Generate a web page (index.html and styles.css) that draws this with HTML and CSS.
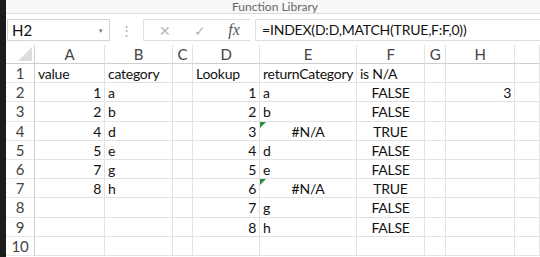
FILE: index.html
```html
<!DOCTYPE html>
<html lang="en">
<head>
  <meta charset="UTF-8">
  <title>Sheet</title>
  <link rel="stylesheet" href="styles.css">
</head>
<body>
  <div class="edge"></div>
  <div class="app">
    <div class="ribbon">Function Library</div>
    <div class="formula-bar">
      <div class="name-box">H2<span class="caret">&#9662;</span></div>
      <div class="grip">&#8942;</div>
      <div class="fx-buttons">
        <span class="btn-x">&#10005;</span>
        <span class="btn-ok">&#10003;</span>
        <span class="btn-fx">fx</span>
      </div>
      <div class="formula">=INDEX(D:D,MATCH(TRUE,F:F,0))</div>
    </div>
    <div class="grid" id="grid"></div>
  </div>

  <script>
    const cols = ['A', 'B', 'C', 'D', 'E', 'F', 'G', 'H', ''];
    // row: [A, B, C, D, E, F, G, H]
    const data = [
      ['value', 'category', '', 'Lookup', 'returnCategory', 'is N/A', '', ''],
      [1, 'a', '', 1, 'a', 'FALSE', '', 3],
      [2, 'b', '', 2, 'b', 'FALSE', '', ''],
      [4, 'd', '', 3, '#N/A', 'TRUE', '', ''],
      [5, 'e', '', 4, 'd', 'FALSE', '', ''],
      [7, 'g', '', 5, 'e', 'FALSE', '', ''],
      [8, 'h', '', 6, '#N/A', 'TRUE', '', ''],
      ['', '', '', 7, 'g', 'FALSE', '', ''],
      ['', '', '', 8, 'h', 'FALSE', '', ''],
      ['', '', '', '', '', '', '', '']
    ];

    const grid = document.getElementById('grid');

    function cell(cls, text) {
      const el = document.createElement('div');
      el.className = cls;
      el.textContent = text;
      grid.appendChild(el);
      return el;
    }

    cell('corner', '');
    cols.forEach(c => cell('col-head', c));

    data.forEach((row, r) => {
      cell('row-head', r + 1);
      row.forEach((v, c) => {
        let cls = 'cell';
        if (typeof v === 'number') cls += ' num';
        if (v === 'TRUE' || v === 'FALSE' || v === '#N/A') cls += ' center';
        const el = cell(cls, v);
        if (v === '#N/A') el.classList.add('flag');
      });
      cell('cell', '');
    });
  </script>
</body>
</html>
```

FILE: styles.css
```css
html, body {
  margin: 0;
  height: 100%;
  overflow: hidden;
}
body {
  display: flex;
  background: #fff;
  font-family: "Lato", "Liberation Sans", sans-serif;
  color: #111;
}
.edge {
  width: 6px;
  background: #1c1c1c;
  flex: none;
}
.app {
  flex: 1;
  display: flex;
  flex-direction: column;
}
.app > div {
  flex: none;
}
.ribbon {
  height: 13px;
  border-bottom: 1px solid #dcdcdc;
  background: #f8f8f8;
  font-size: 12px;
  line-height: 13px;
  color: #666;
  text-align: center;
  padding-left: 4px;
}
.formula-bar {
  height: 31px;
  display: flex;
  align-items: flex-start;
  padding-top: 5px;
  box-sizing: border-box;
  background: #fff;
}
.name-box {
  margin-left: 1px;
  width: 103px;
  height: 22px;
  box-sizing: border-box;
  border: 1px solid #d6d6d6;
  font-size: 15px;
  line-height: 20px;
  padding-left: 4px;
  display: flex;
  justify-content: space-between;
}
.caret {
  font-size: 7px;
  color: #777;
  padding-right: 6px;
}
.grip {
  width: 33px;
  text-align: center;
  color: #aaa;
  font-size: 13px;
  line-height: 22px;
}
.fx-buttons {
  width: 108px;
  height: 22px;
  box-sizing: border-box;
  border: 1px solid #e0e0e0;
  border-right: none;
  display: flex;
  align-items: center;
  justify-content: space-around;
  padding-left: 4px;
}
.btn-x, .btn-ok {
  color: #b5b5b5;
  font-size: 14px;
}
.btn-fx {
  font-family: "Liberation Serif", serif;
  font-style: italic;
  color: #555;
  font-size: 16px;
}
.formula {
  flex: 1;
  height: 22px;
  box-sizing: border-box;
  margin-left: 4px;
  border: 1px solid #e0e0e0;
  border-right: none;
  font-size: 14px;
  letter-spacing: -0.2px;
  line-height: 20px;
  padding-left: 6px;
}
.grid {
  display: grid;
  grid-template-columns: 29px 70px 68px 20px 67px 97px 68px 21px 69px 1fr;
  grid-template-rows: 19px;
  grid-auto-rows: 19.2px;
  font-size: 14px;
  letter-spacing: -0.25px;
}
.grid > div {
  box-sizing: border-box;
  line-height: 19px;
  white-space: nowrap;
}
.corner {
  position: relative;
  border-right: 1px solid #cfcfcf;
  border-bottom: 1px solid #cfcfcf;
}
.corner::after {
  content: '';
  position: absolute;
  right: 2px;
  bottom: 2px;
  border-left: 14px solid transparent;
  border-bottom: 14px solid #dcdcdc;
}
.col-head {
  text-align: center;
  color: #444;
  font-size: 15px;
  border-right: 1px solid #e2e2e2;
  border-bottom: 1px solid #cfcfcf;
}
.row-head {
  text-align: center;
  color: #444;
  font-size: 15px;
  border-right: 1px solid #cfcfcf;
  border-bottom: 1px solid #e8e8e8;
}
.cell {
  position: relative;
  padding: 0 3px;
  border-right: 1px solid #e2e2e2;
  border-bottom: 1px solid #e2e2e2;
}
.num {
  text-align: right;
}
.center {
  text-align: center;
}
.flag::before {
  content: '';
  position: absolute;
  left: 0;
  top: 0;
  border-top: 6px solid #2e8b3e;
  border-right: 6px solid transparent;
}
```
